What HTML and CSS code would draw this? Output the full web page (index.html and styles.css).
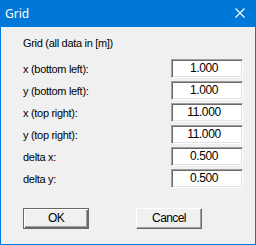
FILE: index.html
```html
<!DOCTYPE html>
<html>
    <head>
        <title>Grid</title>
        <meta charset="UTF-8">
        <link rel="stylesheet" href="styles.css">
    </head>
    <body>
        <div class="dialog">
            <div class="titlebar">
                <span class="caption">Grid</span>
                <svg class="close" width="10" height="10" viewBox="0 0 10 10">
                    <path d="M0.5 0.5 L9.5 9.5 M9.5 0.5 L0.5 9.5" stroke="#fff" stroke-width="1.1" fill="none"/>
                </svg>
            </div>
            <div class="content">
                <div class="heading">Grid (all data in [m])</div>
                <div class="rows">
                    <label>x (bottom left):</label><div class="field">1.000</div>
                    <label>y (bottom left):</label><div class="field">1.000</div>
                    <label>x (top right):</label><div class="field">11.000</div>
                    <label>y (top right):</label><div class="field">11.000</div>
                    <label>delta x:</label><div class="field">0.500</div>
                    <label>delta y:</label><div class="field">0.500</div>
                </div>
                <div class="buttons">
                    <div class="btn default">OK</div>
                    <div class="btn">Cancel</div>
                </div>
            </div>
        </div>
    </body>
</html>
```

FILE: styles.css
```css
* {
    margin: 0;
    padding: 0;
    box-sizing: border-box;
}

body {
    background: #f0f0f0;
    font-family: "Liberation Sans", Arial, sans-serif;
    font-size: 11px;
    color: #000;
}

.dialog {
    width: 256px;
    height: 245px;
    border: 1px solid #0078d7;
    border-top: none;
    background: #f0f0f0;
}

.titlebar {
    height: 27px;
    margin: 0 -1px;
    background: #0078d7;
    display: flex;
    align-items: center;
    justify-content: space-between;
    padding: 0 11px 1px 5px;
}

.titlebar .caption {
    color: #fff;
    font-family: "Noto Sans", "Open Sans", sans-serif;
    font-size: 12px;
}

.content {
    padding: 10px 12px 0 22px;
}

.heading {
    line-height: 13px;
    margin-bottom: 9px;
    letter-spacing: -0.3px;
}

.rows {
    display: grid;
    grid-template-columns: 1fr 72px;
    grid-auto-rows: 19px;
    row-gap: 3px;
    align-items: center;
}

.rows label {
    letter-spacing: -0.3px;
}

.field {
    height: 19px;
    line-height: 17px;
    background: #fff;
    border: 1px solid;
    border-color: #a0a0a0 #fff #fff #a0a0a0;
    box-shadow: inset 1px 1px #696969, inset -1px -1px #e3e3e3;
    text-align: center;
    padding-right: 6px;
    font-size: 12px;
    letter-spacing: -0.4px;
}

.buttons {
    display: flex;
    gap: 47px;
    margin-top: 20px;
}

.btn {
    width: 66px;
    height: 21px;
    line-height: 19px;
    text-align: center;
    font-size: 12px;
    letter-spacing: -0.6px;
    border: 1px solid;
    border-color: #fff #696969 #696969 #fff;
    box-shadow: inset -1px -1px #a0a0a0;
}

.btn.default {
    border-color: #696969;
    box-shadow: inset 1px 1px #fff, inset -1px -1px #696969, inset -2px -2px #a0a0a0;
}
```
